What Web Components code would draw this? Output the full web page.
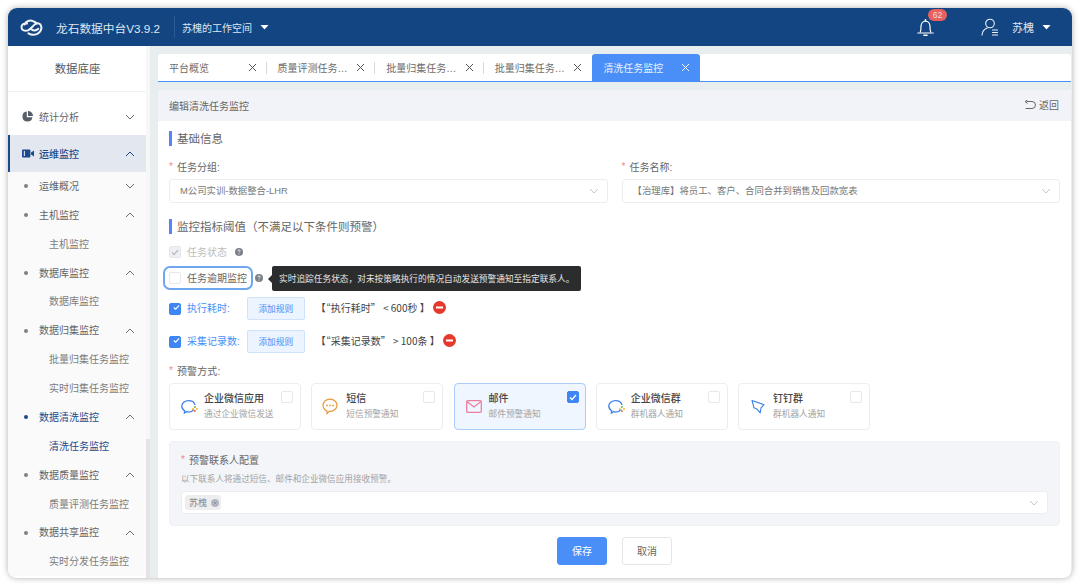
<!DOCTYPE html>
<html lang="zh">
<head>
<meta charset="utf-8">
<title>龙石数据中台</title>
<style>
    html, body { margin: 0; height: 586px; overflow: hidden; background: #fff; }
    body {
        box-sizing: border-box;
        padding: 8px;
        font-family: "Liberation Sans", "Noto Sans CJK SC", sans-serif;
        font-size: 10px;
        color: #666;
    }
</style>
</head>
<body>
<app-shell>
    <top-bar slot="top"></top-bar>
    <side-nav slot="side">
        <nav-row icon="pie" label="统计分析" arrow="down"></nav-row>
        <nav-row icon="video" label="运维监控" arrow="up" current></nav-row>
        <nav-row level="1" label="运维概况" arrow="down"></nav-row>
        <nav-row level="1" label="主机监控" arrow="up"></nav-row>
        <nav-row level="2" label="主机监控"></nav-row>
        <nav-row level="1" label="数据库监控" arrow="up"></nav-row>
        <nav-row level="2" label="数据库监控"></nav-row>
        <nav-row level="1" label="数据归集监控" arrow="up"></nav-row>
        <nav-row level="2" label="批量归集任务监控"></nav-row>
        <nav-row level="2" label="实时归集任务监控"></nav-row>
        <nav-row level="1" label="数据清洗监控" arrow="up" selected></nav-row>
        <nav-row level="2" label="清洗任务监控" selected></nav-row>
        <nav-row level="1" label="数据质量监控" arrow="up"></nav-row>
        <nav-row level="2" label="质量评测任务监控"></nav-row>
        <nav-row level="1" label="数据共享监控" arrow="up"></nav-row>
        <nav-row level="2" label="实时分发任务监控"></nav-row>
    </side-nav>
    <tab-strip slot="main">
        <tab-chip label="平台概览"></tab-chip>
        <tab-chip label="质量评测任务…"></tab-chip>
        <tab-chip label="批量归集任务…"></tab-chip>
        <tab-chip label="批量归集任务…" last></tab-chip>
        <tab-chip label="清洗任务监控" active></tab-chip>
    </tab-strip>
    <edit-panel slot="main" heading="编辑清洗任务监控">
        <section-title>基础信息</section-title>
        <div style="display:flex;gap:14px">
            <form-select label="任务分组" value="M公司实训-数据整合-LHR"></form-select>
            <form-select label="任务名称" value="【治理库】将员工、客户、合同合并到销售及回款宽表"></form-select>
        </div>
        <section-title style="margin-top:6px">监控指标阈值（不满足以下条件则预警）</section-title>
        <check-row state="disabled" label="任务状态" help></check-row>
        <check-row state="focus" label="任务逾期监控" help tip="实时追踪任务状态，对未按策略执行的情况自动发送预警通知至指定联系人。" style="margin-top:8px"></check-row>
        <rule-row label="执行耗时:" gap="17" rule="【“执行耗时” < 600秒 】" style="margin-top:10px"></rule-row>
        <rule-row label="采集记录数:" gap="7" rule="【“采集记录数” > 100条 】" style="margin-top:10px"></rule-row>
        <form-label style="margin-top:8px">预警方式</form-label>
        <div style="display:flex;gap:10.25px;margin-top:2px">
            <channel-card icon="wecom" name="企业微信应用" note="通过企业微信发送"></channel-card>
            <channel-card icon="sms" name="短信" note="短信预警通知"></channel-card>
            <channel-card icon="mail" name="邮件" note="邮件预警通知" checked></channel-card>
            <channel-card icon="wecom" name="企业微信群" note="群机器人通知"></channel-card>
            <channel-card icon="ding" name="钉钉群" note="群机器人通知"></channel-card>
        </div>
        <contact-box style="margin-top:11px"></contact-box>
        <div style="display:flex;justify-content:center;gap:15px;margin-top:11px">
            <action-button primary>保存</action-button>
            <action-button>取消</action-button>
        </div>
    </edit-panel>
</app-shell>

<script>
const chevron = (dir, color, size = 10) => `
    <svg width="${size}" height="${size}" viewBox="0 0 10 10" fill="none" stroke="${color}" stroke-width="1">
        <path d="${dir === 'up' ? 'M1 7L5 3l4 4' : 'M1 3l4 4 4-4'}"/>
    </svg>`;

const caret = `<svg width="9" height="5" viewBox="0 0 9 5" fill="#fff"><path d="M0.5 0h8L4.500 4.600z"/></svg>`;

const ICONS = {
    pie: `<svg width="11" height="11" viewBox="0 0 11 11" fill="#595f69">
        <path d="M4.800 .6v5.600h5.600A5 5 0 1 1 4.800 .6z"/><path d="M6 0a5 5 0 0 1 5 5H6z"/></svg>`,
    video: `<svg width="12" height="9" viewBox="0 0 12 9" fill="#1a4a8c">
        <rect x="0" y="0.5" width="8.400" height="8" rx="1"/><path d="M9 3.400L12 1.400v6.200L9 5.600z"/>
        <rect x="1.800" y="2" width="1.100" height="5" fill="#e2e7f0"/></svg>`,
    wecom: `<svg width="18" height="18" viewBox="0 0 18 18" fill="none">
        <path d="M13.700 11.600c-1 1.500-2.900 2.500-5 2.500-.8 0-1.500-.1-2.200-.4L4.400 15l.2-2.300C2.700 11.600 1.800 10 1.800 8.300 1.800 5 4.900 2.600 8.600 2.600c3 0 5.500 1.600 6.300 3.900" stroke="#3b82e8" stroke-width="1.300" stroke-linecap="round"/>
        <circle cx="14.900" cy="9" r="1.100" fill="#7ac143"/><circle cx="17" cy="11" r="1" fill="#f5b82e"/>
        <circle cx="14.800" cy="13" r="1" fill="#ea6a3a"/><circle cx="12.800" cy="11" r="1" fill="#f2c43c"/></svg>`,
    sms: `<svg width="16" height="17" viewBox="0 0 16 17" fill="none">
        <path d="M8 1.200c3.900 0 7 2.700 7 6.100s-3.100 6-7 6h-.7L5 15.500v-2.500C2.600 12 1 9.900 1 7.300 1 3.900 4.100 1.200 8 1.200z" stroke="#e39a3b" stroke-width="1.200"/>
        <circle cx="5" cy="7.400" r=".9" fill="#e39a3b"/><circle cx="8" cy="7.400" r=".9" fill="#e39a3b"/><circle cx="11" cy="7.400" r=".9" fill="#e39a3b"/></svg>`,
    mail: `<svg style="margin-left:1px" width="16" height="13" viewBox="0 0 16 13" fill="none" stroke="#e97f9c" stroke-width="1.300">
        <rect x=".7" y=".7" width="14.600" height="11.600" rx="1.200"/><path d="M1 1.500l7 5.500 7-5.500"/></svg>`,
    ding: `<svg style="margin-left:2px" width="14" height="15" viewBox="0 0 14 15" fill="none" stroke="#3b82e8" stroke-width="1.100" stroke-linejoin="round">
        <path d="M1 1.500l12 4.200-3 3.200-.8 5L6.300 10.300 3 8.800z"/></svg>`
};

class AppShell extends HTMLElement {
    constructor() {
        super();
        this.attachShadow({ mode: 'open' }).innerHTML = `
            <style>
                :host {
                    display: flex;
                    flex-direction: column;
                    width: 1064px;
                    height: 570px;
                    border-radius: 9px;
                    overflow: hidden;
                    background: #e8edf0;
                    box-shadow: 0 0 6px rgba(0, 0, 0, .32);
                }
                .body { flex: 1; display: flex; min-height: 0; }
                .main {
                    flex: 1;
                    min-width: 0;
                    display: flex;
                    flex-direction: column;
                    padding: 8px 1px 0 8px;
                }
            </style>
            <slot name="top"></slot>
            <div class="body">
                <slot name="side"></slot>
                <div class="main"><slot name="main"></slot></div>
            </div>`;
    }
}

class TopBar extends HTMLElement {
    constructor() {
        super();
        this.attachShadow({ mode: 'open' }).innerHTML = `
            <style>
                :host {
                    display: flex;
                    align-items: center;
                    flex: none;
                    height: 38px;
                    background: #134582;
                    color: #dfe7f1;
                }
                .logo { margin-left: 12px; }
                .brand { margin-left: 13px; font-size: 11.7px; white-space: nowrap; }
                .split { width: 1px; height: 22px; margin: 0 7px 0 14px; background: #2c5a92; }
                .space { white-space: nowrap; }
                .space + svg { margin-left: 8px; }
                .grow { flex: 1; }
                .bell { position: relative; display: flex; width: 17px; }
                .badge {
                    position: absolute;
                    left: 11px;
                    top: -9px;
                    width: 19px;
                    height: 12px;
                    border-radius: 6px;
                    background: #e7625f;
                    color: #fbd9d8;
                    font-size: 8.5px;
                    line-height: 12px;
                    text-align: center;
                }
                .user { margin-left: 47px; }
                .name { margin: 0 8px 0 13px; font-size: 11px; }
                .tail { width: 21px; }
            </style>
            <svg class="logo" width="23" height="17" viewBox="0 0 23 17" fill="none" stroke="#eef2f7" stroke-width="2" stroke-linecap="round">
                <path d="M7 4.500C3.500 4 1.500 5.900 1.500 8.200c0 3 3.500 4.600 7 2.900 2.500-1.200 4-4 6.500-5.800 2-1.400 4.200-1 5.400.2"/>
                <path d="M4.600 5.500C6 2 9.800.8 13.200 2.200c1.600.6 2.800 1.400 3.600 2.300"/>
                <path d="M8.500 14.400c2.700 1.700 6 1.800 8.800.4 3.500-1.800 5-5.500 3.500-8.200"/>
                <path d="M11.500 10.400c2.300 1.400 5 1.100 6.800-.6"/>
            </svg>
            <span class="brand">龙石数据中台V3.9.2</span>
            <span class="split"></span>
            <span class="space">苏槐的工作空间</span>${caret}
            <span class="grow"></span>
            <span class="bell">
                <svg width="17" height="19" viewBox="0 0 17 19" fill="none" stroke="#fff" stroke-width="1.200">
                    <path d="M3.200 14.500c.8-1.500.8-3.500.8-6 0-3 2-5.300 4.500-5.300S13 5.500 13 8.500c0 2.500 0 4.500.8 6"/>
                    <path d="M.8 15h15.400" stroke-linecap="round"/>
                    <path d="M8.500 1v2" stroke-width="1.400"/>
                    <path d="M7 17.300h3" stroke-width="1.600" stroke-linecap="round"/>
                </svg>
                <span class="badge">62</span>
            </span>
            <svg class="user" width="18" height="18" viewBox="0 0 18 18" fill="none" stroke="#eef2f7" stroke-width="1.100" stroke-linecap="round">
                <circle cx="9" cy="5.500" r="4.300"/>
                <path d="M1 17c.3-3.700 2.500-6 5.200-7"/>
                <path d="M11.500 12h5M11.500 14.500h5M11.500 17h5" stroke-width="1.200"/>
            </svg>
            <span class="name">苏槐</span>${caret}
            <span class="tail"></span>`;
    }
}

class SideNav extends HTMLElement {
    constructor() {
        super();
        this.attachShadow({ mode: 'open' }).innerHTML = `
            <style>
                :host { display: flex; flex: none; width: 142px; background: #fff; }
                .col { width: 138px; display: flex; flex-direction: column; overflow: hidden; }
                .title {
                    flex: none;
                    height: 45px;
                    line-height: 47px;
                    padding-left: 1px;
                    text-align: center;
                    font-size: 11.4px;
                    color: #555;
                    border-bottom: 1px solid #eff0f2;
                }
                .list { padding-top: 6px; background: #fff; }
                .track { width: 4px; display: flex; flex-direction: column; background: #f7f7f8; padding-top: 393px; box-sizing: border-box; }
                .thumb { flex: 1; background: #e4e4e6; }
            </style>
            <div class="col">
                <div class="title">数据底座</div>
                <div class="list"><slot></slot></div>
            </div>
            <div class="track"><div class="thumb"></div></div>`;
    }
}

class NavRow extends HTMLElement {
    constructor() {
        super();
        const level = this.getAttribute('level') || '0';
        const current = this.hasAttribute('current');
        const selected = this.hasAttribute('selected');
        const arrow = this.getAttribute('arrow');
        const text = current || selected ? '#1a4a8c' : (level === '2' ? '#7d7d7d' : '#5f6368');
        const lead = level === '0'
            ? `<span class="lead">${ICONS[this.getAttribute('icon')] || ''}</span>`
            : level === '1' ? `<span class="lead"><i></i></span>` : '';
        this.attachShadow({ mode: 'open' }).innerHTML = `
            <style>
                :host {
                    display: flex;
                    align-items: center;
                    box-sizing: border-box;
                    height: ${level === '0' ? '37px' : '28.89px'};
                    background: ${level === '0' ? (current ? '#e2e7f0' : '#fff') : '#fafafa'};
                    color: ${text};
                    font-weight: ${current ? 500 : 400};
                    padding-left: ${level === '2' ? '41px' : '0'};
                    ${current ? 'box-shadow: inset 2px 0 0 #1a4a8c;' : ''}
                }
                .lead { width: 31px; display: flex; justify-content: center; padding-left: 8px; box-sizing: border-box; }
                i { width: 4px; height: 4px; border-radius: 50%; background: ${selected ? '#1a4a8c' : '#7b7f86'}; margin-left: -4px; }
                .label { flex: 1; white-space: nowrap; margin-bottom: ${level === '0' ? 0 : 2}px; }
                .end { display: flex; margin-right: 11px; }
            </style>
            ${lead}
            <span class="label">${this.getAttribute('label')}</span>
            ${arrow ? `<span class="end">${chevron(arrow, current ? '#1a4a8c' : '#6a6e75')}</span>` : ''}`;
    }
}

class TabStrip extends HTMLElement {
    constructor() {
        super();
        this.attachShadow({ mode: 'open' }).innerHTML = `
            <style>
                :host {
                    display: flex;
                    flex: none;
                    height: 28px;
                    box-sizing: border-box;
                    background: #fff;
                    border-bottom: 1px solid #4a8ff7;
                    border-radius: 3px 3px 0 0;
                    overflow: hidden;
                }
            </style>
            <slot></slot>`;
    }
}

class TabChip extends HTMLElement {
    constructor() {
        super();
        const active = this.hasAttribute('active');
        const split = !active && !this.hasAttribute('last');
        this.attachShadow({ mode: 'open' }).innerHTML = `
            <style>
                :host {
                    display: flex;
                    align-items: center;
                    position: relative;
                    box-sizing: border-box;
                    flex: none;
                    width: ${active ? '108px' : '108.6px'};
                    padding: 0 10px 0 11px;
                    color: ${active ? '#e8f1ff' : '#6c6c6c'};
                    background: ${active ? '#4a8ff7' : 'transparent'};
                    border-radius: 3px 3px 0 0;
                }
                .text { white-space: nowrap; }
                svg { margin-left: auto; }
                .split { position: absolute; right: 0; top: 8px; width: 1px; height: 12px; background: #d9d9d9; }
            </style>
            <span class="text">${this.getAttribute('label')}</span>
            <svg width="9" height="9" viewBox="0 0 9 9" stroke="${active ? '#fff' : '#555'}" stroke-width="1" fill="none">
                <path d="M1 1l7 7M8 1L1 8"/>
            </svg>
            ${split ? '<span class="split"></span>' : ''}`;
    }
}

class EditPanel extends HTMLElement {
    constructor() {
        super();
        this.attachShadow({ mode: 'open' }).innerHTML = `
            <style>
                :host {
                    display: flex;
                    flex-direction: column;
                    flex: 1;
                    min-height: 0;
                    margin-top: 8px;
                    background: #fff;
                }
                header {
                    flex: none;
                    display: flex;
                    justify-content: space-between;
                    align-items: center;
                    height: 31px;
                    padding: 0 12px 0 11px;
                    background: #f1f3f8;
                    color: #666;
                }
                .back { display: flex; align-items: center; gap: 3px; color: #666; padding-bottom: 2px; }
                .form { display: flex; flex-direction: column; padding: 0 11px; }
            </style>
            <header>
                <span>${this.getAttribute('heading')}</span>
                <span class="back">
                    <svg width="12" height="10" viewBox="0 0 12 10" fill="none" stroke="#666" stroke-width="1" stroke-linecap="round">
                        <path d="M3 1.500h5a3 3 0 0 1 0 7H2"/><path d="M3.200 .2L1 1.600l2.200 1.600"/>
                    </svg>
                    返回
                </span>
            </header>
            <div class="form"><slot></slot></div>`;
    }
}

class SectionTitle extends HTMLElement {
    constructor() {
        super();
        this.attachShadow({ mode: 'open' }).innerHTML = `
            <style>
                :host {
                    display: flex;
                    align-items: center;
                    gap: 5px;
                    height: 34px;
                    font-size: 11.5px;
                    color: #666;
                }
                b { width: 3px; height: 15px; background: #5b82f6; }
            </style>
            <b></b><slot></slot>`;
    }
}

class FormLabel extends HTMLElement {
    constructor() {
        super();
        this.attachShadow({ mode: 'open' }).innerHTML = `
            <style>
                :host { display: flex; align-items: center; box-sizing: border-box; height: 20px; padding-bottom: 2px; color: #666; letter-spacing: .1px; }
                em { font-style: normal; color: #f08a85; margin-right: 4px; }
            </style>
            <em>*</em><slot></slot>:`;
    }
}

class FormSelect extends HTMLElement {
    constructor() {
        super();
        this.attachShadow({ mode: 'open' }).innerHTML = `
            <style>
                :host { display: flex; flex-direction: column; flex: 1; min-width: 0; }
                .label { box-sizing: border-box; height: 24px; padding-bottom: 2px; display: flex; align-items: center; color: #666; }
                em { font-style: normal; color: #f08a85; margin-right: 4px; }
                .box {
                    display: flex;
                    align-items: center;
                    justify-content: space-between;
                    box-sizing: border-box;
                    height: 24px;
                    padding: 0 8px 0 10px;
                    border: 1px solid #ebedf0;
                    border-radius: 3px;
                    color: #777;
                    font-size: 9.4px;
                }
                .value { margin-bottom: 2px; }
            </style>
            <div class="label"><em>*</em>${this.getAttribute('label')}:</div>
            <div class="box"><span class="value">${this.getAttribute('value')}</span>${chevron('down', '#c4c7cc')}</div>`;
    }
}

const HELP = `<svg width="8" height="8" viewBox="0 0 8 8"><circle cx="4" cy="4" r="4" fill="#7b7f86"/>
    <path d="M2.800 3c0-.7.5-1.100 1.200-1.100s1.200.4 1.200 1c0 .8-1.200.8-1.200 1.700" fill="none" stroke="#fff" stroke-width=".8"/><circle cx="4" cy="6.100" r=".5" fill="#fff"/></svg>`;

const checkBox = (state) => {
    const on = state === 'on';
    const off = state === 'disabled';
    return `<span style="display:inline-flex;align-items:center;justify-content:center;flex:none;box-sizing:border-box;width:12px;height:12px;border-radius:2px;
        background:${on ? '#3f86f5' : off ? '#eef0f4' : '#fff'};border:1px solid ${on ? '#3f86f5' : off ? '#e4e6eb' : '#e6e8ec'}">
        ${on || off ? `<svg width="8" height="7" viewBox="0 0 8 7" fill="none" stroke="${on ? '#fff' : '#b9bdc6'}" stroke-width="1.300"><path d="M1 3.500l2 2L7 1"/></svg>` : ''}
    </span>`;
};

class CheckRow extends HTMLElement {
    constructor() {
        super();
        const state = this.getAttribute('state');
        const tip = this.getAttribute('tip');
        this.attachShadow({ mode: 'open' }).innerHTML = `
            <style>
                :host {
                    display: flex;
                    align-items: center;
                    position: relative;
                    height: 18px;
                    color: ${state === 'disabled' ? '#bcbcbc' : '#666'};
                }
                .label { margin: 0 0 2px 6px; }
                .help { display: flex; margin-left: 8px; }
                .focus {
                    position: absolute;
                    left: -6px;
                    top: -3px;
                    width: 89.500px;
                    height: 24px;
                    box-sizing: border-box;
                    border: 2.500px solid #6fa6f0;
                    border-radius: 7px;
                }
                .tip {
                    position: absolute;
                    left: 103px;
                    top: -3px;
                    height: 25px;
                    padding: 0 7px;
                    display: flex;
                    align-items: center;
                    background: #2b2c2e;
                    color: #e6e6e6;
                    border-radius: 2px;
                    font-size: 8.700px;
                    white-space: nowrap;
                }
                .tip::before {
                    content: "";
                    position: absolute;
                    left: -4px;
                    top: 9px;
                    border: 4px solid transparent;
                    border-left: 0;
                    border-right-color: #2b2c2e;
                }
            </style>
            ${state === 'focus' ? '<span class="focus"></span>' : ''}
            ${checkBox(state === 'disabled' ? 'disabled' : 'off')}
            <span class="label">${this.getAttribute('label')}</span>
            <span class="help">${HELP}</span>
            ${tip ? `<span class="tip">${tip}</span>` : ''}`;
    }
}

class RuleRow extends HTMLElement {
    constructor() {
        super();
        this.attachShadow({ mode: 'open' }).innerHTML = `
            <style>
                :host { display: flex; align-items: center; height: 23px; }
                .label { margin: 0 0 2px 6px; color: #4a8ff7; }
                button {
                    all: unset;
                    box-sizing: border-box;
                    width: 58px;
                    height: 23px;
                    margin-left: ${this.getAttribute('gap')}px;
                    text-align: center;
                    line-height: 20px;
                    font-size: 8.700px;
                    color: #4a8ff7;
                    background: #ecf4ff;
                    border: 1px solid #cfe2fb;
                    border-radius: 2px;
                }
                .rule { margin: 0 0 2px 11px; color: #444; white-space: pre; font-family: "Noto Sans CJK SC", sans-serif; }
                svg { margin: 0 0 2px 3px; }
            </style>
            ${checkBox('on')}
            <span class="label">${this.getAttribute('label')}</span>
            <button>添加规则</button>
            <span class="rule">${this.getAttribute('rule').replace('<', '&lt;')}</span>
            <svg width="13" height="13" viewBox="0 0 13 13"><circle cx="6.500" cy="6.500" r="6.500" fill="#e5392c"/><rect x="3" y="5.500" width="7" height="2" fill="#fff"/></svg>`;
    }
}

class ChannelCard extends HTMLElement {
    constructor() {
        super();
        const checked = this.hasAttribute('checked');
        this.attachShadow({ mode: 'open' }).innerHTML = `
            <style>
                :host {
                    display: flex;
                    align-items: center;
                    position: relative;
                    box-sizing: border-box;
                    width: 132px;
                    height: 47px;
                    padding-left: 10px;
                    border: 1px solid ${checked ? '#a9ccf9' : '#ebedf0'};
                    border-radius: 4px;
                    background: ${checked ? '#f0f6ff' : '#fff'};
                }
                .icon { width: 24px; display: flex; }
                .text { display: flex; flex-direction: column; gap: 4px; margin-top: -1px; }
                .name { color: #444; font-weight: 500; line-height: 12px; }
                .note { color: #a3a3a3; font-size: 8.700px; line-height: 11px; }
                .mark { position: absolute; right: ${checked ? 6 : 7}px; top: 7px; display: flex; }
            </style>
            <span class="icon">${ICONS[this.getAttribute('icon')]}</span>
            <span class="text">
                <span class="name">${this.getAttribute('name')}</span>
                <span class="note">${this.getAttribute('note')}</span>
            </span>
            <span class="mark">${checkBox(checked ? 'on' : 'off')}</span>`;
    }
}

class ContactBox extends HTMLElement {
    constructor() {
        super();
        this.attachShadow({ mode: 'open' }).innerHTML = `
            <style>
                :host {
                    display: flex;
                    flex-direction: column;
                    box-sizing: border-box;
                    height: 85px;
                    padding: 8px 11px 0;
                    background: #f4f5f9;
                    border: 1px solid #f0f1f5;
                    border-radius: 4px;
                }
                .label { height: 18px; display: flex; align-items: center; color: #666; }
                em { font-style: normal; color: #f08a85; margin-right: 4px; }
                .hint { margin-top: 3px; height: 14px; display: flex; align-items: center; font-size: 8.600px; color: #a3a3a3; }
                .box {
                    margin-top: 6px;
                    height: 23px;
                    box-sizing: border-box;
                    display: flex;
                    align-items: center;
                    justify-content: space-between;
                    padding: 0 8px 0 3px;
                    background: #fff;
                    border: 1px solid #ebedf0;
                    border-radius: 3px;
                }
                .tag {
                    display: flex;
                    align-items: center;
                    gap: 4px;
                    height: 15px;
                    padding: 0 2px 0 4px;
                    background: #eeeeef;
                    border-radius: 3px;
                    color: #8a8a8a;
                    font-size: 9px;
                }
            </style>
            <div class="label"><em>*</em>预警联系人配置</div>
            <div class="hint">以下联系人将通过短信、邮件和企业微信应用接收预警。</div>
            <div class="box">
                <span class="tag">苏槐
                    <svg width="8" height="8" viewBox="0 0 8 8"><circle cx="4" cy="4" r="4" fill="#b4b8c4"/><path d="M2.500 2.500l3 3M5.500 2.500l-3 3" stroke="#8d919c" stroke-width=".8"/></svg>
                </span>
                ${chevron('down', '#c4c7cc')}
            </div>`;
    }
}

class ActionButton extends HTMLElement {
    constructor() {
        super();
        const primary = this.hasAttribute('primary');
        this.attachShadow({ mode: 'open' }).innerHTML = `
            <style>
                :host {
                    display: flex;
                    align-items: center;
                    justify-content: center;
                    box-sizing: border-box;
                    width: 50px;
                    height: 28px;
                    padding-bottom: 1px;
                    border-radius: 3px;
                    background: ${primary ? '#4a8ff7' : '#fff'};
                    color: ${primary ? '#fff' : '#666'};
                    border: 1px solid ${primary ? '#4a8ff7' : '#e4e6ea'};
                }
            </style>
            <slot></slot>`;
    }
}

customElements.define('app-shell', AppShell);
customElements.define('top-bar', TopBar);
customElements.define('side-nav', SideNav);
customElements.define('nav-row', NavRow);
customElements.define('tab-strip', TabStrip);
customElements.define('tab-chip', TabChip);
customElements.define('edit-panel', EditPanel);
customElements.define('section-title', SectionTitle);
customElements.define('form-label', FormLabel);
customElements.define('form-select', FormSelect);
customElements.define('check-row', CheckRow);
customElements.define('rule-row', RuleRow);
customElements.define('channel-card', ChannelCard);
customElements.define('contact-box', ContactBox);
customElements.define('action-button', ActionButton);
</script>
</body>
</html>
